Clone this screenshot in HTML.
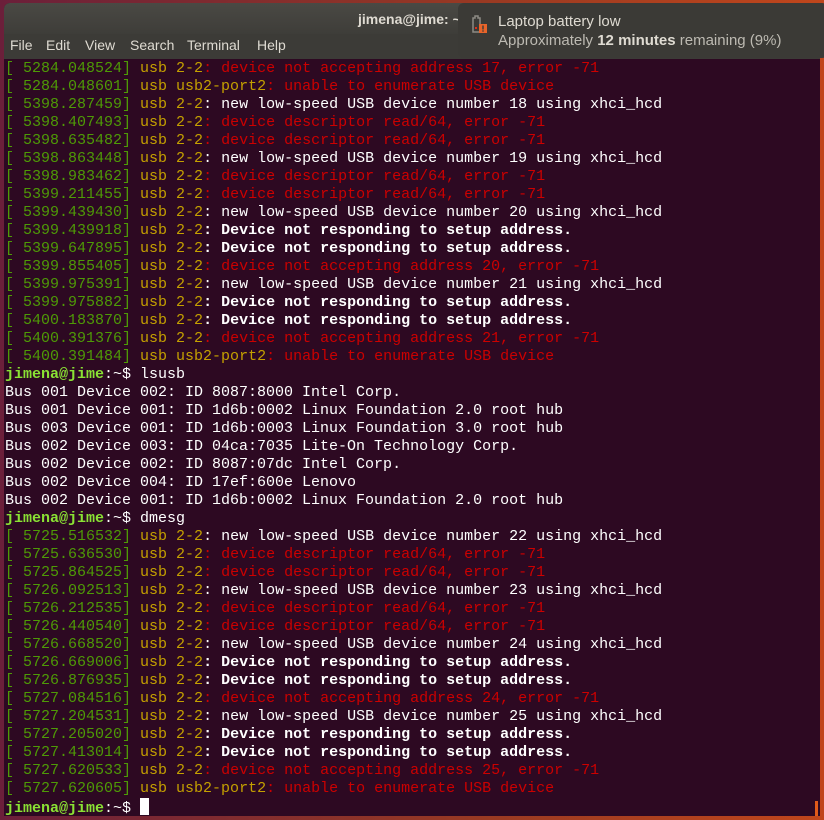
<!DOCTYPE html>
<html><head><meta charset="utf-8"><style>
*{margin:0;padding:0;box-sizing:border-box}
html,body{width:824px;height:820px;overflow:hidden;background:#8a2c1e}
body{position:relative;background:linear-gradient(90deg,#6b1f3a,#9a3a22 60%,#c0461c)}
.win{position:absolute;left:4px;top:3px;width:816px;height:813px;background:#2d0922;border-radius:6px 6px 0 0;overflow:hidden}
.title{position:absolute;left:0;top:0;width:100%;height:31px;background:linear-gradient(#4a4944,#3e3d39);color:#dfdbd2;font:bold 14px "Liberation Sans",sans-serif;}
.title span{position:absolute;left:354px;top:8px}
.menu{position:absolute;left:0;top:31px;width:100%;height:25px;background:#3c3b37;color:#dfdbd2;font:14px "Liberation Sans",sans-serif}
.menu span{position:absolute;top:3px}
.term{position:absolute;left:1px;top:57px;font:15px/18px "Liberation Mono",monospace;color:#fff;white-space:pre;letter-spacing:0}
.g{color:#4e9a06}.y{color:#c4a000}.r{color:#cc0000}.b{font-weight:bold;color:#fff}.p{font-weight:bold;color:#8ae234}
.cur{display:inline-block;width:9px;height:17px;background:#fff;vertical-align:-3px}
.sb{position:absolute;right:2px;top:798px;width:3px;height:15px;background:#e05a1a}
.notif{position:absolute;left:458px;top:3px;width:370px;height:55px;background:#3b3a36;border-radius:6px;color:#dfdbd2;font:15px "Liberation Sans",sans-serif}
.notif .t1{position:absolute;left:40px;top:10px}
.notif .t2{position:absolute;left:40px;top:29px;color:#bdbab2}
</style></head><body>
<div class="win">
<div class="title"><span>jimena@jime: ~</span></div>
<div class="menu"><span style="left:6px">File</span><span style="left:42px">Edit</span><span style="left:81px">View</span><span style="left:126px">Search</span><span style="left:183px">Terminal</span><span style="left:253px">Help</span></div>
<div class="term"><span class="g">[ 5284.048524]</span> <span class="y">usb 2-2</span><span class="r">: device not accepting address 17, error -71</span>
<span class="g">[ 5284.048601]</span> <span class="y">usb usb2-port2</span><span class="r">: unable to enumerate USB device</span>
<span class="g">[ 5398.287459]</span> <span class="y">usb 2-2</span>: new low-speed USB device number 18 using xhci_hcd
<span class="g">[ 5398.407493]</span> <span class="y">usb 2-2</span><span class="r">: device descriptor read/64, error -71</span>
<span class="g">[ 5398.635482]</span> <span class="y">usb 2-2</span><span class="r">: device descriptor read/64, error -71</span>
<span class="g">[ 5398.863448]</span> <span class="y">usb 2-2</span>: new low-speed USB device number 19 using xhci_hcd
<span class="g">[ 5398.983462]</span> <span class="y">usb 2-2</span><span class="r">: device descriptor read/64, error -71</span>
<span class="g">[ 5399.211455]</span> <span class="y">usb 2-2</span><span class="r">: device descriptor read/64, error -71</span>
<span class="g">[ 5399.439430]</span> <span class="y">usb 2-2</span>: new low-speed USB device number 20 using xhci_hcd
<span class="g">[ 5399.439918]</span> <span class="y">usb 2-2</span><span class="b">: Device not responding to setup address.</span>
<span class="g">[ 5399.647895]</span> <span class="y">usb 2-2</span><span class="b">: Device not responding to setup address.</span>
<span class="g">[ 5399.855405]</span> <span class="y">usb 2-2</span><span class="r">: device not accepting address 20, error -71</span>
<span class="g">[ 5399.975391]</span> <span class="y">usb 2-2</span>: new low-speed USB device number 21 using xhci_hcd
<span class="g">[ 5399.975882]</span> <span class="y">usb 2-2</span><span class="b">: Device not responding to setup address.</span>
<span class="g">[ 5400.183870]</span> <span class="y">usb 2-2</span><span class="b">: Device not responding to setup address.</span>
<span class="g">[ 5400.391376]</span> <span class="y">usb 2-2</span><span class="r">: device not accepting address 21, error -71</span>
<span class="g">[ 5400.391484]</span> <span class="y">usb usb2-port2</span><span class="r">: unable to enumerate USB device</span>
<span class="p">jimena@jime</span>:~$ lsusb
Bus 001 Device 002: ID 8087:8000 Intel Corp.
Bus 001 Device 001: ID 1d6b:0002 Linux Foundation 2.0 root hub
Bus 003 Device 001: ID 1d6b:0003 Linux Foundation 3.0 root hub
Bus 002 Device 003: ID 04ca:7035 Lite-On Technology Corp.
Bus 002 Device 002: ID 8087:07dc Intel Corp.
Bus 002 Device 004: ID 17ef:600e Lenovo
Bus 002 Device 001: ID 1d6b:0002 Linux Foundation 2.0 root hub
<span class="p">jimena@jime</span>:~$ dmesg
<span class="g">[ 5725.516532]</span> <span class="y">usb 2-2</span>: new low-speed USB device number 22 using xhci_hcd
<span class="g">[ 5725.636530]</span> <span class="y">usb 2-2</span><span class="r">: device descriptor read/64, error -71</span>
<span class="g">[ 5725.864525]</span> <span class="y">usb 2-2</span><span class="r">: device descriptor read/64, error -71</span>
<span class="g">[ 5726.092513]</span> <span class="y">usb 2-2</span>: new low-speed USB device number 23 using xhci_hcd
<span class="g">[ 5726.212535]</span> <span class="y">usb 2-2</span><span class="r">: device descriptor read/64, error -71</span>
<span class="g">[ 5726.440540]</span> <span class="y">usb 2-2</span><span class="r">: device descriptor read/64, error -71</span>
<span class="g">[ 5726.668520]</span> <span class="y">usb 2-2</span>: new low-speed USB device number 24 using xhci_hcd
<span class="g">[ 5726.669006]</span> <span class="y">usb 2-2</span><span class="b">: Device not responding to setup address.</span>
<span class="g">[ 5726.876935]</span> <span class="y">usb 2-2</span><span class="b">: Device not responding to setup address.</span>
<span class="g">[ 5727.084516]</span> <span class="y">usb 2-2</span><span class="r">: device not accepting address 24, error -71</span>
<span class="g">[ 5727.204531]</span> <span class="y">usb 2-2</span>: new low-speed USB device number 25 using xhci_hcd
<span class="g">[ 5727.205020]</span> <span class="y">usb 2-2</span><span class="b">: Device not responding to setup address.</span>
<span class="g">[ 5727.413014]</span> <span class="y">usb 2-2</span><span class="b">: Device not responding to setup address.</span>
<span class="g">[ 5727.620533]</span> <span class="y">usb 2-2</span><span class="r">: device not accepting address 25, error -71</span>
<span class="g">[ 5727.620605]</span> <span class="y">usb usb2-port2</span><span class="r">: unable to enumerate USB device</span>
<span class="p">jimena@jime</span>:~$ <span class="cur"></span></div>
<div class="sb"></div>
</div>
<div class="notif">
<svg style="position:absolute;left:12px;top:11px" width="18" height="20" viewBox="0 0 18 20"><path d="M3 4h2V2h3v2h2v14H3z" fill="none" stroke="#8c8a84" stroke-width="1.5"/><rect x="5" y="13" width="2" height="2" fill="#e0301a"/><rect x="9" y="10" width="8" height="9" fill="#e8642a"/><rect x="12.3" y="11.5" width="1.4" height="4" fill="#3b3a36"/><rect x="12.3" y="16.3" width="1.4" height="1.4" fill="#3b3a36"/></svg>
<div class="t1">Laptop battery low</div>
<div class="t2">Approximately <b style="color:#dfdbd2">12 minutes</b> remaining (9%)</div>
</div>
</body></html>
